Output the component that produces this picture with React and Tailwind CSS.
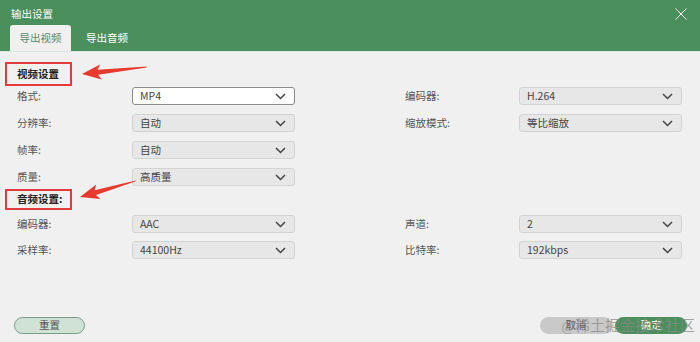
import React from 'react';

const font = { fontFamily: '"Noto Sans CJK SC", "Noto Sans", sans-serif' };

const Chevron = () => (
  <svg width="11" height="7" viewBox="0 0 11 7" className="shrink-0">
    <path d="M1 1 L5.5 5.5 L10 1" fill="none" stroke="#444" strokeWidth="1.5" />
  </svg>
);

const Select = ({ value, active }) => (
  <div
    className={`w-[163px] h-[18px] flex items-center justify-between pl-[7px] pr-[8px] rounded-[3px] border ${
      active ? 'bg-white border-[#8a8a8a]' : 'bg-[#e7e7e7] border-[#d3d3d3]'
    }`}
  >
    <span className="text-[10.5px] leading-none text-[#444]">{value}</span>
    <Chevron />
  </div>
);

const Field = ({ label, value, active, labelWidth }) => (
  <div className="flex items-center">
    <div className={`${labelWidth} text-[10.5px] leading-none text-[#555]`}>{label}</div>
    <Select value={value} active={active} />
  </div>
);

const Row = ({ left, right }) => (
  <div className="flex items-center h-[18px]">
    <div className="pl-[17px]">
      <Field {...left} labelWidth="w-[115px]" />
    </div>
    {right && (
      <div className="ml-[110px]">
        <Field {...right} labelWidth="w-[114px]" />
      </div>
    )}
  </div>
);

const SectionTitle = ({ children, className }) => (
  <div className={`ml-[5px] w-[67px] border-2 border-[#e23b3b] flex items-center pl-[10px] ${className}`}>
    <span className="text-[10.5px] font-bold leading-none text-[#222]">{children}</span>
  </div>
);

const Arrow = ({ x, y, len, angle }) => (
  <g transform={`translate(${x},${y}) rotate(${angle})`}>
    <polygon
      points={`0,0 19,-7.5 16,-2.5 ${len},-0.4 ${len},0.4 16,2.5 19,7.5`}
      fill="#e8392f"
    />
  </g>
);

export default function App() {
  return (
    <div className="relative w-[700px] h-[342px] bg-[#f0f0f0] flex flex-col overflow-hidden" style={font}>
      {/* Header */}
      <div className="relative h-[52px] bg-[#4b8f5d] border-b border-[#dbe6dd] flex flex-col justify-between">
        <div className="pl-[11px] pt-[8px] text-[10.5px] leading-[12px] text-white">输出设置</div>
        <div className="flex items-end pl-[10px]">
          <div className="w-[61px] h-[26px] bg-[#f0f0f0] rounded-t-[3px] flex items-center justify-center text-[10.5px] text-[#5b8a68]">
            导出视频
          </div>
          <div className="ml-[15px] h-[26px] flex items-center text-[10.5px] text-white">导出音频</div>
        </div>
        <svg className="absolute right-[13px] top-[8px]" width="12" height="12" viewBox="0 0 12 12">
          <path d="M0.5 0.5 L11.5 11.5 M11.5 0.5 L0.5 11.5" stroke="#fff" strokeWidth="1" fill="none" />
        </svg>
      </div>

      {/* Content */}
      <div className="flex flex-col pt-[10px]">
        <SectionTitle className="h-[24px]">视频设置</SectionTitle>
        <div className="flex flex-col gap-[9px] mt-[1px]">
          <Row left={{ label: '格式:', value: 'MP4', active: true }} right={{ label: '编码器:', value: 'H.264' }} />
          <Row left={{ label: '分辨率:', value: '自动' }} right={{ label: '缩放模式:', value: '等比缩放' }} />
          <Row left={{ label: '帧率:', value: '自动' }} />
          <Row left={{ label: '质量:', value: '高质量' }} />
        </div>
        <SectionTitle className="h-[21px] mt-[3px]">音频设置:</SectionTitle>
        <div className="flex flex-col gap-[8px] mt-[5px]">
          <Row left={{ label: '编码器:', value: 'AAC' }} right={{ label: '声道:', value: '2' }} />
          <Row left={{ label: '采样率:', value: '44100Hz' }} right={{ label: '比特率:', value: '192kbps' }} />
        </div>
      </div>

      {/* Footer */}
      <div className="mt-auto mb-[8px] flex items-center px-[14px]">
        <button className="w-[71px] h-[17px] rounded-full bg-[#cfe2d5] border border-[#7d9c88] text-[10.5px] leading-none text-[#555]">
          重置
        </button>
        <div className="ml-auto flex gap-[3px] mr-[-1px]">
          <button className="w-[72px] h-[17px] rounded-full bg-[#c9c9c9] text-[10.5px] leading-none text-[#555]">取消</button>
          <button className="w-[72px] h-[17px] rounded-full bg-[#4b8f5d] text-[10.5px] leading-none text-white">确定</button>
        </div>
      </div>

      {/* Watermark */}
      <div
        className="absolute right-[5px] bottom-[8px] text-[15px] leading-none text-[#8a8a8a]/75 pointer-events-none"
        style={{ fontFamily: '"Liberation Serif", "Noto Sans CJK SC", serif' }}
      >
        @稀土掘金技术社区
      </div>

      {/* Annotation arrows */}
      <svg className="absolute inset-0 pointer-events-none" width="700" height="342">
        <Arrow x={82} y={74} len={65} angle={-6.2} />
        <Arrow x={80} y={197} len={58} angle={-16.2} />
      </svg>
    </div>
  );
}
